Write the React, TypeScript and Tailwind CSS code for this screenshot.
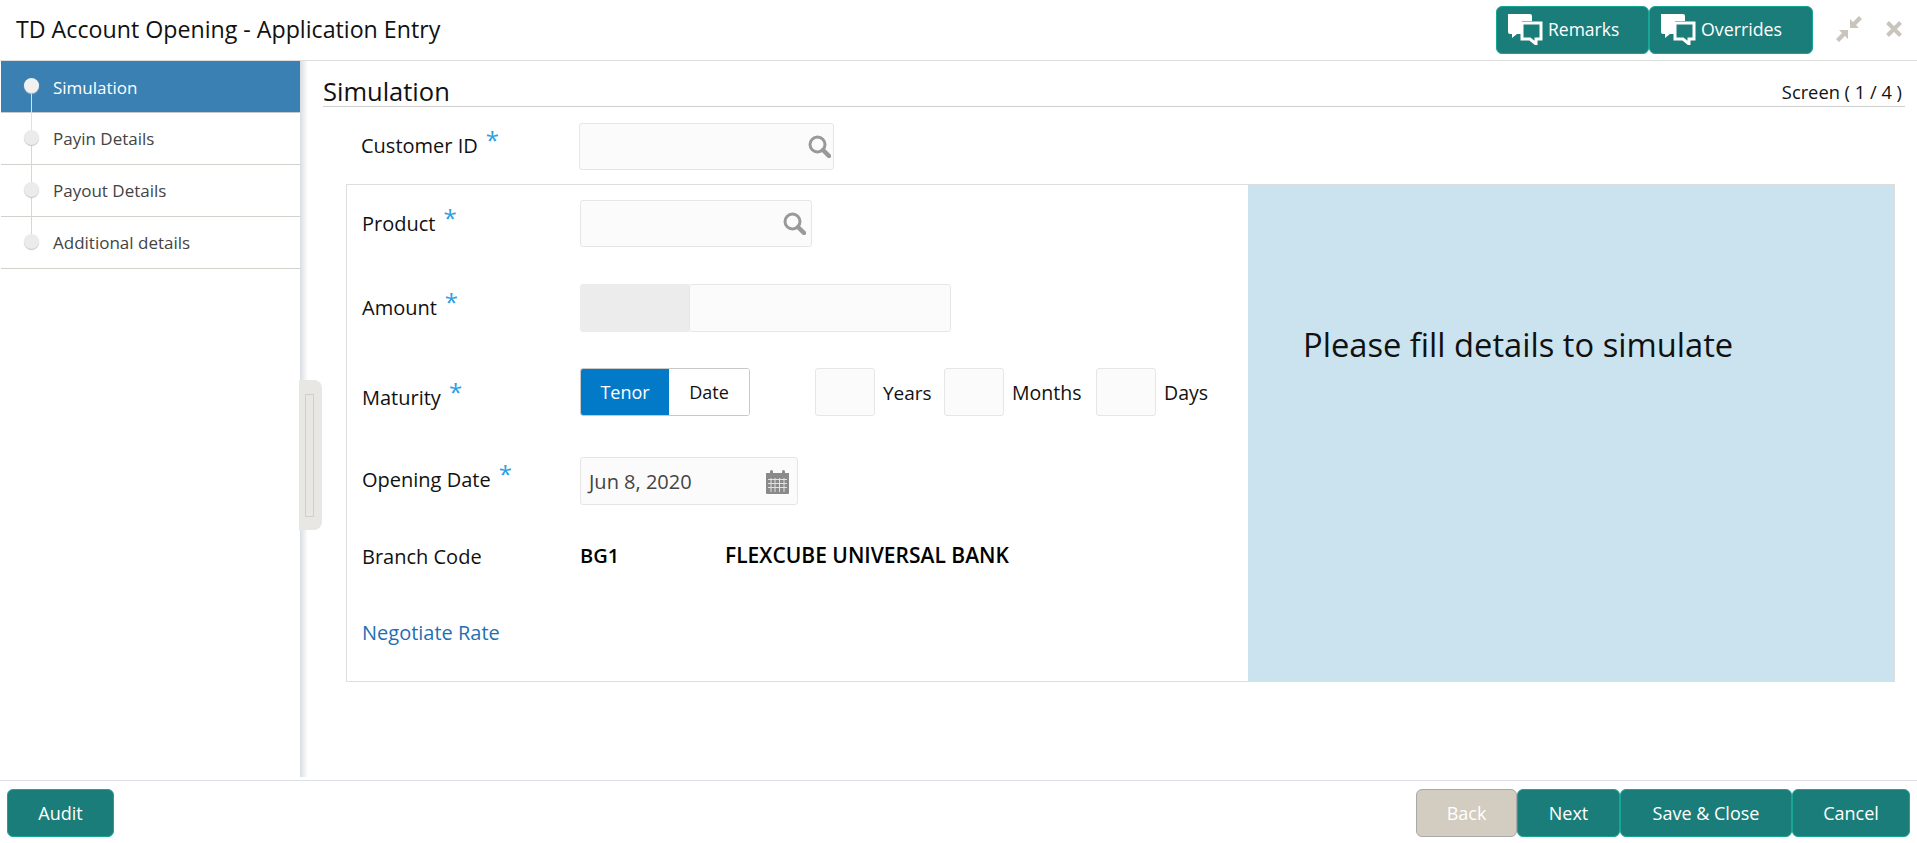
import type { ReactNode } from "react";

const font = "font-['Open_Sans',sans-serif]";

const steps = ["Simulation", "Payin Details", "Payout Details", "Additional details"];

function ChatIcon() {
  return (
    <svg width="36" height="32" viewBox="0 0 36 32" className="shrink-0">
      <path d="M1 1h22a2 2 0 0 1 2 2v5H15v13H10l-5 4v-4H3a2 2 0 0 1-2-2z" fill="#fff" />
      <path d="M15 10h19v16h-5v5l-6-5h-8z" fill="#1b7d79" stroke="#fff" strokeWidth="3" strokeLinejoin="miter" />
    </svg>
  );
}

function SearchIcon() {
  return (
    <svg width="23" height="23" viewBox="0 0 23 23" fill="none" stroke="#999" className="shrink-0">
      <circle cx="9.5" cy="9.5" r="7.5" strokeWidth="3" />
      <path d="M15 15l6 6" strokeWidth="4.5" strokeLinecap="round" />
    </svg>
  );
}

function CalendarIcon() {
  return (
    <svg width="25" height="25" viewBox="0 0 25 25" className="shrink-0">
      <path d="M1 4h23v20a1 1 0 0 1-1 1H2a1 1 0 0 1-1-1z" fill="#8a8a8a" />
      <rect x="5" y="1" width="3" height="6" rx="1.5" fill="#8a8a8a" />
      <rect x="17" y="1" width="3" height="6" rx="1.5" fill="#8a8a8a" />
      <path d="M3 10.5h19M3 14.5h19M3 18.5h19M6 9v14M10 9v14M14.5 9v14M19 9v14" stroke="#fff" strokeWidth="1" opacity="0.75" />
    </svg>
  );
}

function Required({ label }: { label: string }) {
  return (
    <span className="text-[#111]">
      {label}
      <span className="relative -top-[4px] ml-[8px] text-[24px] leading-none text-[#2b9fe2]">*</span>
    </span>
  );
}

function Box({ className }: { className: string }) {
  return <div className={`rounded-[3px] border border-[#e6e6e6] bg-[#fbfbfb] ${className}`} />;
}

function TealButton({ children, className }: { children: ReactNode; className: string }) {
  return (
    <button className={`flex h-[48px] items-center justify-center rounded-[6px] border border-[#17a596] bg-[#1b7d79] text-[18px] text-white ${className}`}>
      {children}
    </button>
  );
}

function Row({ label, className, labelClass = "", children }: { label: ReactNode; className: string; labelClass?: string; children: ReactNode }) {
  return (
    <div className={`flex items-center ${className}`}>
      <div className={`w-[233px] shrink-0 pl-[15px] text-[20px] ${labelClass}`}>{label}</div>
      {children}
    </div>
  );
}

export default function App() {
  return (
    <div className={`flex h-[843px] w-full flex-col overflow-hidden bg-white text-[#111] ${font}`}>
      <header className="flex h-[61px] shrink-0 items-center border-b border-[#dedede] pl-4 pr-[15px]">
        <h1 className="pb-[2px] text-[23.2px] font-normal">TD Account Opening - Application Entry</h1>
        <div className="ml-auto flex items-center">
          <TealButton className="w-[153px] justify-start pb-[2px] pl-[10px] text-[17.5px]">
            <ChatIcon />
            <span className="ml-[5px] text-[17.5px]">Remarks</span>
          </TealButton>
          <TealButton className="w-[164px] justify-start pb-[2px] pl-[10px]">
            <ChatIcon />
            <span className="ml-[5px] text-[17.8px]">Overrides</span>
          </TealButton>
          <svg width="26" height="26" viewBox="0 0 26 26" fill="#c9c5bc" className="mb-[2px] ml-[23px]">
            <path d="M23 0l3 3-6 6 3 3H14V3l3 3z" />
            <path d="M3 26l-3-3 6-6-3-3h9v9l-3-3z" />
          </svg>
          <svg width="16" height="16" viewBox="0 0 16 16" fill="none" stroke="#c9c5bc" strokeWidth="4" className="mb-[2px] ml-[24px]">
            <path d="M1.5 1.5l13 13M14.5 1.5l-13 13" />
          </svg>
        </div>
      </header>

      <div className="relative flex min-h-0 flex-1">
        <nav className="ml-px w-[299px] shrink-0">
          {steps.map((step, i) => (
            <div
              key={step}
              className={`relative flex h-[52px] items-center border-b pl-[52px] text-[17px] ${
                i === 0 ? "border-[#c9c9c9] bg-[#3b80b2] pt-[3px] text-white" : "border-[#d3d1cc] pt-[1px] text-[#444]"
              }`}
            >
              {step}
              {i < steps.length - 1 && (
                <span className={`absolute left-[30px] top-[25px] h-[52px] w-px ${i === 0 ? "bg-[#d5e3ee]" : "bg-[#d6d6d6]"}`} />
              )}
              <span
                className={`absolute left-[23px] top-[17px] h-[15px] w-[15px] rounded-full shadow-[0_1px_1px_#c4c4c4] ${
                  i === 0 ? "bg-[#f1f1f1]" : "bg-[#ebebeb]"
                }`}
              />
            </div>
          ))}
        </nav>

        <div className="mb-[3px] w-[8px] shrink-0 bg-gradient-to-r from-[#d9dde3] to-white" />

        <main className="min-w-0 flex-1 pl-[15px] pr-[12px]">
          <div className="flex h-[46px] items-end justify-between border-b border-[#cfcfcf] pr-[3px]">
            <h2 className="text-[25.5px] font-normal leading-[30px]">Simulation</h2>
            <span className="pb-[1px] text-[18.3px]">Screen ( 1 / 4 )</span>
          </div>

          <div className="mt-[15px] flex h-[48px] items-center pl-[38px]">
            <div className="w-[218px] shrink-0 text-[20px]">
              <Required label="Customer ID" />
            </div>
            <div className="flex h-[47px] w-[255px] items-center justify-end rounded-[3px] border border-[#e6e6e6] bg-[#fbfbfb] pr-[2px]">
              <SearchIcon />
            </div>
          </div>

          <section className="ml-[23px] mr-[10px] mt-[14px] flex h-[498px] border border-[#dedede]">
            <div className="w-[901px] shrink-0 pt-[15px]">
              <Row label={<Required label="Product" />} className="h-[47px]">
                <div className="flex h-[47px] w-[232px] items-center justify-end rounded-[3px] border border-[#e6e6e6] bg-[#fbfbfb] pr-[5px]">
                  <SearchIcon />
                </div>
              </Row>
              <Row label={<Required label="Amount" />} className="mt-[37px] h-[48px]">
                <div className="h-[48px] w-[109px] rounded-l-[3px] bg-[#ececec]" />
                <Box className="h-[48px] w-[262px]" />
              </Row>
              <Row label={<Required label="Maturity" />} labelClass="pt-[12px]" className="mt-[36px] h-[48px]">
                <div className="flex h-[48px] w-[170px] overflow-hidden rounded-[3px] border border-[#c9c9c9] text-[18px]">
                  <span className="flex w-[88px] items-center justify-center bg-[#037ac8] text-white">Tenor</span>
                  <span className="flex flex-1 items-center justify-center bg-white">Date</span>
                </div>
                <Box className="ml-[65px] h-[48px] w-[60px]" />
                <span className="ml-[8px] w-[61px] pt-[2px] text-[19px]">Years</span>
                <Box className="h-[48px] w-[60px]" />
                <span className="ml-[8px] w-[84px] pt-[2px] text-[19.5px]">Months</span>
                <Box className="h-[48px] w-[60px]" />
                <span className="ml-[8px] pt-[2px] text-[19.5px]">Days</span>
              </Row>
              <Row label={<Required label="Opening Date" />} labelClass="pb-[2px]" className="mt-[41px] h-[48px]">
                <div className="flex h-[48px] w-[218px] items-center justify-between rounded-[3px] border border-[#e6e6e6] bg-[#fbfbfb] pl-[8px] pr-[7px] text-[20px] text-[#444]">
                  <span className="pt-[1px]">Jun 8, 2020</span>
                  <CalendarIcon />
                </div>
              </Row>
              <Row label="Branch Code" className="mt-[29px] h-[46px]">
                <span className="w-[145px] pb-[2px] text-[20px] font-semibold text-black">BG1</span>
                <span className="pb-[2px] text-[21px] font-semibold text-black">FLEXCUBE UNIVERSAL BANK</span>
              </Row>
              <Row label={<span className="text-[#1f6fb3]">Negotiate Rate</span>} labelClass="pb-[2px]" className="mt-[31px] h-[46px]">
                <span />
              </Row>
            </div>
            <div className="flex-1 bg-[#cbe3ef] pl-[55px] pt-[137px] text-[32.7px] leading-[46px] text-[#111]">
              Please fill details to simulate
            </div>
          </section>
        </main>

        {/* splitter handle sits over the sidebar edge */}
        <div className="absolute left-[299px] top-[319px] flex h-[150px] w-[23px] items-center rounded-r-[8px] bg-[#e8e7e3] pl-[6px]">
          <div className="h-[123px] w-[9px] border border-[#cfcfcb]" />
        </div>
      </div>

      <footer className="flex h-[63px] shrink-0 items-start border-t border-[#dde0e4] pl-[7px] pr-[7px] pt-[8px]">
        <TealButton className="w-[107px]">Audit</TealButton>
        <div className="ml-auto flex">
          <button className="h-[48px] w-[101px] rounded-[6px] border border-[#a9a9a9] bg-[#d3ccc1] text-[18px] text-white">Back</button>
          <TealButton className="w-[103px]">Next</TealButton>
          <TealButton className="w-[172px]">Save &amp; Close</TealButton>
          <TealButton className="w-[118px]">Cancel</TealButton>
        </div>
      </footer>
    </div>
  );
}
